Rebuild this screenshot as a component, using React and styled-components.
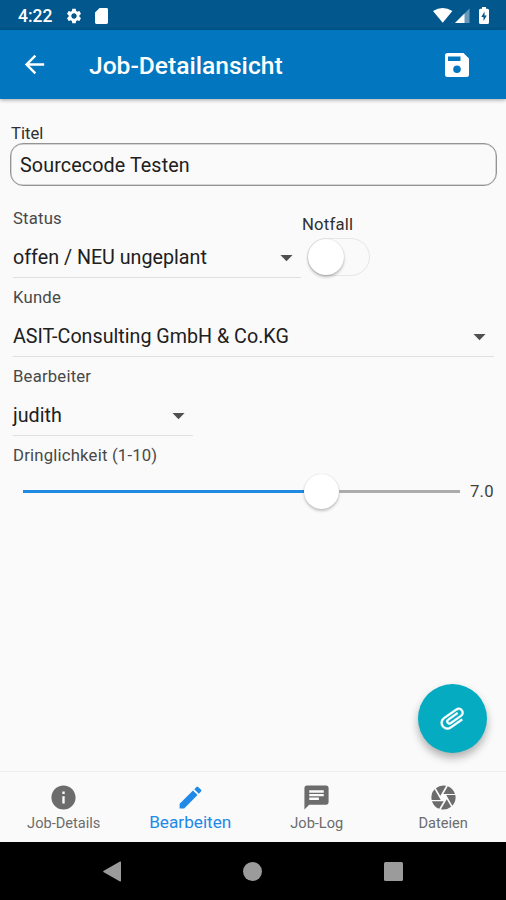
import React, { useState } from 'react';
import styled, { createGlobalStyle } from 'styled-components';
import {
  MdArrowBack,
  MdSettings,
  MdArrowDropDown,
  MdInfo,
  MdEdit,
  MdChat,
  MdCamera,
  MdAttachFile,
} from 'react-icons/md';

const tabs = [
  { name: 'Job-Details', Icon: MdInfo },
  { name: 'Bearbeiten', Icon: MdEdit },
  { name: 'Job-Log', Icon: MdChat },
  { name: 'Dateien', Icon: MdCamera },
];

function StatusBar() {
  return (
    <StatusWrapper>
      <Clock>4:22</Clock>
      <MdSettings size={18} />
      <SdCard viewBox="0 0 13 16">
        <path d="M4.6 0H11.6Q13 0 13 1.4V14.6Q13 16 11.6 16H1.4Q0 16 0 14.6V4.6Z" />
      </SdCard>
      <StatusIcons width="57" height="18" viewBox="0 0 57 18">
        <path d="M0 4Q9.700 -2 19.400 4L9.700 15.700Z" />
        <path d="M36.500 1.500V16H22Z" opacity="0.4" />
        <path d="M31.500 6.500V16H22Z" />
        <path d="M48 1.800H49V0H53V1.800H54.500Q56 1.800 56 3.300V15.500Q56 17 54.500 17H47.500Q46 17 46 15.500V3.300Q46 1.800 47.500 1.800Z" />
        <path d="M51.500 4.500L48.300 10H50.500V14L53.800 8.500H51.500Z" fill="#02588c" />
      </StatusIcons>
    </StatusWrapper>
  );
}

function SaveIcon() {
  return (
    <svg width="24" height="24" viewBox="0 0 24 24" fill="currentColor" fillRule="evenodd">
      <path d="M2.500 0H18.500L24 5.500V21.500Q24 24 21.500 24H2.500Q0 24 0 21.500V2.500Q0 0 2.500 0ZM3 3.500V8H15.500V3.500ZM12 12.500A3.800 3.800 0 1 0 12 20.100A3.800 3.800 0 1 0 12 12.500Z" />
    </svg>
  );
}

function SelectField({ label, value, width }) {
  return (
    <Field $width={width}>
      <Label>{label}</Label>
      <Select>
        <span>{value}</span>
        <MdArrowDropDown size={29} />
      </Select>
    </Field>
  );
}

function App() {
  const [active, setActive] = useState('Bearbeiten');
  const urgency = 7;

  return (
    <Screen>
      <GlobalStyle />
      <StatusBar />
      <Toolbar>
        <MdArrowBack size={29} />
        <Title>Job-Detailansicht</Title>
        <SaveIcon />
      </Toolbar>
      <Content>
        <TitleLabel>Titel</TitleLabel>
        <Input defaultValue="Sourcecode Testen" />
        <StatusRow>
          <SelectField label="Status" value="offen / NEU ungeplant" width="288px" />
          <Emergency>
            <EmergencyLabel>Notfall</EmergencyLabel>
            <Switch>
              <Knob />
            </Switch>
          </Emergency>
        </StatusRow>
        <SelectField label="Kunde" value="ASIT-Consulting GmbH & Co.KG" width="481px" />
        <SelectField label="Bearbeiter" value="judith" width="180px" />
        <Label>Dringlichkeit (1-10)</Label>
        <SliderRow>
          <Track>
            <Filled style={{ flexGrow: urgency }} />
            <Thumb />
            <Rest style={{ flexGrow: 10 - urgency }} />
          </Track>
          <SliderValue>{urgency.toFixed(1)}</SliderValue>
        </SliderRow>
        <Fab>
          <MdAttachFile size={29} />
        </Fab>
      </Content>
      <BottomNav>
        {tabs.map(({ name, Icon }) => (
          <Tab key={name} $active={name === active} onClick={() => setActive(name)}>
            <Icon size={29} />
            <span>{name}</span>
          </Tab>
        ))}
      </BottomNav>
      <SystemNav>
        <svg width="18" height="21" viewBox="0 0 18 21">
          <path d="M18 1.200V19.800Q18 21 17 20.400L0.800 11.300Q-0.500 10.500 0.800 9.700L17 0.600Q18 0 18 1.200Z" />
        </svg>
        <svg width="19" height="19" viewBox="0 0 19 19">
          <circle cx="9.500" cy="9.500" r="9.500" />
        </svg>
        <svg width="19" height="19" viewBox="0 0 19 19">
          <rect width="19" height="19" rx="1.500" />
        </svg>
      </SystemNav>
    </Screen>
  );
}

const GlobalStyle = createGlobalStyle`
  * {
    box-sizing: border-box;
  }
  body {
    margin: 0;
    font-family: Roboto, sans-serif;
    color: #202020;
  }
`;

const Screen = styled.div`
  width: 506px;
  height: 900px;
  display: flex;
  flex-direction: column;
  background: #fafafa;
  overflow: hidden;
`;

const StatusWrapper = styled.div`
  height: 30px;
  padding: 2px 16px 0 18px;
  display: flex;
  align-items: center;
  flex-shrink: 0;
  background: #02588c;
  color: #ffffff;
  fill: #ffffff;
`;

const Clock = styled.span`
  width: 47px;
  font-size: 17.5px;
  font-weight: 500;
`;

const SdCard = styled.svg`
  width: 13px;
  height: 16px;
  margin-left: 12px;
`;

const StatusIcons = styled.svg`
  margin-left: auto;
`;

const Toolbar = styled.header`
  height: 69px;
  padding: 0 37px 0 20px;
  display: flex;
  align-items: center;
  flex-shrink: 0;
  background: #0277bf;
  color: #ffffff;
  box-shadow: 0 1px 4px rgba(0, 0, 0, 0.35);
  z-index: 1;
`;

const Title = styled.h1`
  margin: 1px auto 0 40px;
  font-size: 24.6px;
  font-weight: 500;
`;

const Content = styled.main`
  flex: 1;
  position: relative;
  padding: 25px 9px 0 13px;
`;

const Label = styled.div`
  font-size: 16.7px;
  line-height: 20px;
  letter-spacing: 0.2px;
  color: #484848;
`;

const TitleLabel = styled(Label)`
  margin-left: -2px;
  line-height: 19px;
  letter-spacing: 0;
  color: #303030;
`;

const Input = styled.input`
  display: block;
  width: 487px;
  height: 43px;
  margin: 0 0 23px -3px;
  padding: 1px 9px 0;
  border: 1px solid #949494;
  box-shadow: inset 0 0 0 0.5px #b0b0b0;
  border-radius: 13px;
  background: transparent;
  color: #202020;
  font-family: inherit;
  font-size: 19.7px;
  letter-spacing: 0.12px;
  outline: none;
`;

const Field = styled.div`
  width: ${({ $width }) => $width};
  height: 79px;
`;

const Select = styled.div`
  height: 49px;
  padding: 8px 0 0;
  display: flex;
  align-items: center;
  justify-content: space-between;
  border-bottom: 1px solid #e0e0e0;
  font-size: 19.7px;

  svg {
    color: #505050;
  }
`;

const StatusRow = styled.div`
  display: flex;
`;

const Emergency = styled.div`
  padding: 6px 0 0 1px;
`;

const EmergencyLabel = styled(Label)`
  color: #303030;
`;

const Switch = styled.div`
  width: 63px;
  height: 38px;
  margin: 3px 0 0 5px;
  border: 1.5px solid #e6e6e6;
  border-radius: 19px;
`;

const Knob = styled.div`
  width: 36px;
  height: 36px;
  border-radius: 50%;
  background: #ffffff;
  box-shadow: 0 2px 3px rgba(0, 0, 0, 0.25), 0 0 1px rgba(0, 0, 0, 0.2);
`;

const SliderRow = styled.div`
  height: 36px;
  margin: 7px 0 0 10px;
  display: flex;
  align-items: center;
`;

const Track = styled.div`
  width: 437px;
  display: flex;
  align-items: center;
`;

const Filled = styled.div`
  height: 3px;
  background: #2089e2;
`;

const Rest = styled.div`
  height: 3px;
  background: #acacac;
`;

const Thumb = styled.div`
  width: 35px;
  height: 35px;
  flex-shrink: 0;
  border-radius: 50%;
  background: #ffffff;
  box-shadow: 0 2px 3px rgba(0, 0, 0, 0.22), 0 0 1px rgba(0, 0, 0, 0.2);
`;

const SliderValue = styled.span`
  margin: 1px 0 0 10px;
  font-size: 16.7px;
  letter-spacing: 0.2px;
  color: #404040;
`;

const Fab = styled.button`
  position: absolute;
  right: 19px;
  bottom: 18px;
  width: 69px;
  height: 69px;
  padding: 0;
  display: flex;
  align-items: center;
  justify-content: center;
  border: none;
  border-radius: 50%;
  background: #05acc1;
  color: #ffffff;
  box-shadow: 0 5px 8px rgba(0, 0, 0, 0.3);

  svg {
    transform: rotate(55deg);
    stroke-width: 0.4px;
  }

  path[fill='none'] {
    stroke: none;
  }
`;

const BottomNav = styled.nav`
  height: 71px;
  display: flex;
  flex-shrink: 0;
  border-top: 1px solid #eeeeee;
`;

const Tab = styled.button`
  flex: 1;
  padding: 11px 0 0 1px;
  display: flex;
  flex-direction: column;
  align-items: center;
  border: none;
  background: none;
  color: ${({ $active }) => ($active ? '#2089e8' : '#6c6c6c')};
  font-family: inherit;
  font-size: ${({ $active }) => ($active ? '17.2px' : '14.6px')};

  span {
    line-height: 20px;
    margin-top: ${({ $active }) => ($active ? '0' : '1px')};
  }
`;

const SystemNav = styled.div`
  height: 58px;
  padding: 0 103px;
  display: flex;
  align-items: center;
  justify-content: space-between;
  flex-shrink: 0;
  background: #000000;
  fill: #9b9b9b;
`;

export default App;
